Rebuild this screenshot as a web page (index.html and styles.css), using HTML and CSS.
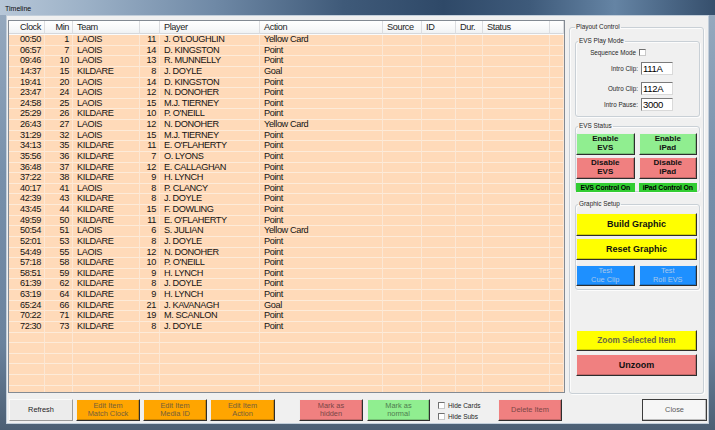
FILE: index.html
```html
<!DOCTYPE html>
<html>
<head>
<meta charset="utf-8">
<title>Timeline</title>
<link rel="stylesheet" href="styles.css">
</head>
<body>
<div class="window">
  <div class="titlebar"><span class="title">Timeline</span></div>
  <div class="client">
    <div class="top">
      <div class="grid">
        <div class="row head"><span class="r">Clock</span><span class="r">Min</span><span>Team</span><span></span><span>Player</span><span>Action</span><span>Source</span><span>ID</span><span>Dur.</span><span>Status</span><span></span></div>
        <div class="row"><span class="r">00:50</span><span class="r">1</span><span>LAOIS</span><span class="r">11</span><span>J. O'LOUGHLIN</span><span>Yellow Card</span><span></span><span></span><span></span><span></span><span></span></div>
        <div class="row"><span class="r">06:57</span><span class="r">7</span><span>LAOIS</span><span class="r">14</span><span>D. KINGSTON</span><span>Point</span><span></span><span></span><span></span><span></span><span></span></div>
        <div class="row"><span class="r">09:46</span><span class="r">10</span><span>LAOIS</span><span class="r">13</span><span>R. MUNNELLY</span><span>Point</span><span></span><span></span><span></span><span></span><span></span></div>
        <div class="row"><span class="r">14:37</span><span class="r">15</span><span>KILDARE</span><span class="r">8</span><span>J. DOYLE</span><span>Goal</span><span></span><span></span><span></span><span></span><span></span></div>
        <div class="row"><span class="r">19:41</span><span class="r">20</span><span>LAOIS</span><span class="r">14</span><span>D. KINGSTON</span><span>Point</span><span></span><span></span><span></span><span></span><span></span></div>
        <div class="row"><span class="r">23:47</span><span class="r">24</span><span>LAOIS</span><span class="r">12</span><span>N. DONOHER</span><span>Point</span><span></span><span></span><span></span><span></span><span></span></div>
        <div class="row"><span class="r">24:58</span><span class="r">25</span><span>LAOIS</span><span class="r">15</span><span>M.J. TIERNEY</span><span>Point</span><span></span><span></span><span></span><span></span><span></span></div>
        <div class="row"><span class="r">25:29</span><span class="r">26</span><span>KILDARE</span><span class="r">10</span><span>P. O'NEILL</span><span>Point</span><span></span><span></span><span></span><span></span><span></span></div>
        <div class="row"><span class="r">26:43</span><span class="r">27</span><span>LAOIS</span><span class="r">12</span><span>N. DONOHER</span><span>Yellow Card</span><span></span><span></span><span></span><span></span><span></span></div>
        <div class="row"><span class="r">31:29</span><span class="r">32</span><span>LAOIS</span><span class="r">15</span><span>M.J. TIERNEY</span><span>Point</span><span></span><span></span><span></span><span></span><span></span></div>
        <div class="row"><span class="r">34:13</span><span class="r">35</span><span>KILDARE</span><span class="r">11</span><span>E. O'FLAHERTY</span><span>Point</span><span></span><span></span><span></span><span></span><span></span></div>
        <div class="row"><span class="r">35:56</span><span class="r">36</span><span>KILDARE</span><span class="r">7</span><span>O. LYONS</span><span>Point</span><span></span><span></span><span></span><span></span><span></span></div>
        <div class="row"><span class="r">36:48</span><span class="r">37</span><span>KILDARE</span><span class="r">12</span><span>E. CALLAGHAN</span><span>Point</span><span></span><span></span><span></span><span></span><span></span></div>
        <div class="row"><span class="r">37:22</span><span class="r">38</span><span>KILDARE</span><span class="r">9</span><span>H. LYNCH</span><span>Point</span><span></span><span></span><span></span><span></span><span></span></div>
        <div class="row"><span class="r">40:17</span><span class="r">41</span><span>LAOIS</span><span class="r">8</span><span>P. CLANCY</span><span>Point</span><span></span><span></span><span></span><span></span><span></span></div>
        <div class="row"><span class="r">42:39</span><span class="r">43</span><span>KILDARE</span><span class="r">8</span><span>J. DOYLE</span><span>Point</span><span></span><span></span><span></span><span></span><span></span></div>
        <div class="row"><span class="r">43:45</span><span class="r">44</span><span>KILDARE</span><span class="r">15</span><span>F. DOWLING</span><span>Point</span><span></span><span></span><span></span><span></span><span></span></div>
        <div class="row"><span class="r">49:59</span><span class="r">50</span><span>KILDARE</span><span class="r">11</span><span>E. O'FLAHERTY</span><span>Point</span><span></span><span></span><span></span><span></span><span></span></div>
        <div class="row"><span class="r">50:54</span><span class="r">51</span><span>LAOIS</span><span class="r">6</span><span>S. JULIAN</span><span>Yellow Card</span><span></span><span></span><span></span><span></span><span></span></div>
        <div class="row"><span class="r">52:01</span><span class="r">53</span><span>KILDARE</span><span class="r">8</span><span>J. DOYLE</span><span>Point</span><span></span><span></span><span></span><span></span><span></span></div>
        <div class="row"><span class="r">54:49</span><span class="r">55</span><span>LAOIS</span><span class="r">12</span><span>N. DONOHER</span><span>Point</span><span></span><span></span><span></span><span></span><span></span></div>
        <div class="row"><span class="r">57:18</span><span class="r">58</span><span>KILDARE</span><span class="r">10</span><span>P. O'NEILL</span><span>Point</span><span></span><span></span><span></span><span></span><span></span></div>
        <div class="row"><span class="r">58:51</span><span class="r">59</span><span>KILDARE</span><span class="r">9</span><span>H. LYNCH</span><span>Point</span><span></span><span></span><span></span><span></span><span></span></div>
        <div class="row"><span class="r">61:39</span><span class="r">62</span><span>KILDARE</span><span class="r">8</span><span>J. DOYLE</span><span>Point</span><span></span><span></span><span></span><span></span><span></span></div>
        <div class="row"><span class="r">63:19</span><span class="r">64</span><span>KILDARE</span><span class="r">9</span><span>H. LYNCH</span><span>Point</span><span></span><span></span><span></span><span></span><span></span></div>
        <div class="row"><span class="r">65:24</span><span class="r">66</span><span>KILDARE</span><span class="r">21</span><span>J. KAVANAGH</span><span>Goal</span><span></span><span></span><span></span><span></span><span></span></div>
        <div class="row"><span class="r">70:22</span><span class="r">71</span><span>KILDARE</span><span class="r">19</span><span>M. SCANLON</span><span>Point</span><span></span><span></span><span></span><span></span><span></span></div>
        <div class="row"><span class="r">72:30</span><span class="r">73</span><span>KILDARE</span><span class="r">8</span><span>J. DOYLE</span><span>Point</span><span></span><span></span><span></span><span></span><span></span></div>
        <div class="row"><span></span><span></span><span></span><span></span><span></span><span></span><span></span><span></span><span></span><span></span><span></span></div>
        <div class="row"><span></span><span></span><span></span><span></span><span></span><span></span><span></span><span></span><span></span><span></span><span></span></div>
        <div class="row"><span></span><span></span><span></span><span></span><span></span><span></span><span></span><span></span><span></span><span></span><span></span></div>
        <div class="row"><span></span><span></span><span></span><span></span><span></span><span></span><span></span><span></span><span></span><span></span><span></span></div>
        <div class="row"><span></span><span></span><span></span><span></span><span></span><span></span><span></span><span></span><span></span><span></span><span></span></div>
        <div class="row"><span></span><span></span><span></span><span></span><span></span><span></span><span></span><span></span><span></span><span></span><span></span></div>
      </div>

      <fieldset class="panel">
        <legend>Playout Control</legend>
        <fieldset class="group play">
          <legend>EVS Play Mode</legend>
          <div class="frow seq"><span class="lbl">Sequence Mode</span><span class="chk"></span></div>
          <div class="frow intro"><span class="lbl">Intro Clip:</span><span class="inp">111A</span></div>
          <div class="frow outro"><span class="lbl">Outro Clip:</span><span class="inp">112A</span></div>
          <div class="frow pause"><span class="lbl">Intro Pause:</span><span class="inp">3000</span></div>
        </fieldset>
        <fieldset class="group status">
          <legend>EVS Status</legend>
          <div class="evsgrid">
            <div class="btn green bold">Enable<br>EVS</div>
            <div class="btn green bold">Enable<br>iPad</div>
            <div class="btn red bold">Disable<br>EVS</div>
            <div class="btn red bold">Disable<br>iPad</div>
            <div class="on">EVS Control On</div>
            <div class="on">iPad Control On</div>
          </div>
        </fieldset>
        <fieldset class="group graphic">
          <legend>Graphic Setup</legend>
          <div class="btn yellow big build">Build Graphic</div>
          <div class="btn yellow big reset">Reset Graphic</div>
          <div class="testrow">
            <div class="btn blue">Test<br>Cue Clip</div>
            <div class="btn blue">Test<br>Roll EVS</div>
          </div>
        </fieldset>
        <div class="btn yellow zoom">Zoom Selected Item</div>
        <div class="btn red unzoom">Unzoom</div>
      </fieldset>
    </div>

    <div class="bottom">
      <div class="btn plain refresh">Refresh</div>
      <div class="btn orange">Edit Item<br>Match Clock</div>
      <div class="btn orange">Edit Item<br>Media ID</div>
      <div class="btn orange w65">Edit Item<br>Action</div>
      <div class="btn red dim hidden">Mark as<br>hidden</div>
      <div class="btn green dim normal">Mark as<br>normal</div>
      <div class="checks">
        <div class="cline"><span class="chk"></span><span>Hide Cards</span></div>
        <div class="cline"><span class="chk"></span><span>Hide Subs</span></div>
      </div>
      <div class="btn red dim delete">Delete Item</div>
      <div class="btn close">Close</div>
    </div>
  </div>
</div>
</body>
</html>
```

FILE: styles.css
```css
* { box-sizing: border-box; }
html, body { margin: 0; padding: 0; }
body {
  width: 715px;
  height: 430px;
  overflow: hidden;
  font-family: "Liberation Sans", Arial, sans-serif;
  background: #3d5674;
}

.window {
  width: 715px;
  height: 430px;
  display: flex;
  flex-direction: column;
  padding: 0 6px 6px 6px;
  background: linear-gradient(180deg, #98abc0 0%, #7790ab 40%, #6a829d 80%, #4c5f74 100%);
}

.titlebar {
  height: 15px;
  margin: 0 -6px;
  padding-left: 5px;
  display: flex;
  align-items: center;
  background: linear-gradient(90deg, #b7c7d8 0%, #9cb1c7 12%, #6f89a6 30%, #3f5a79 48%, #2f4968 62%, #3e5a7a 74%, #6584a4 86%, #496584 94%, #364f6c 100%);
}
.title {
  font-size: 7px;
  color: #0c0c0c;
  margin-top: 1px;
}

.client {
  flex: 1;
  background: #f0f0f0;
  border: 1px solid #c2ceda;
  padding: 4px 1px 0 1px;
  display: flex;
  flex-direction: column;
}

.top {
  display: flex;
  gap: 4px;
  height: 373px;
}

/* ---------- grid ---------- */
.grid {
  width: 557px;
  height: 373px;
  flex: none;
  border: 1px solid #838a93;
  background: #ffdab9;
  overflow: hidden;
}
.row {
  display: grid;
  grid-template-columns: 36px 28px 67px 20px 100px 123px 39px 34px 27px 67px 14px;
  height: 10.63px;
}
.row > span {
  border-right: 1px solid #fce7d4;
  border-bottom: 1px solid #fdebd9;
  padding: 0 3px 0 4px;
  font-size: 9.2px;
  line-height: 9.63px;
  letter-spacing: -0.4px;
  white-space: nowrap;
  overflow: hidden;
  color: #141414;
}
.row > span.r { text-align: right; }
.row.head {
  height: 14px;
  background: linear-gradient(180deg, #ffffff 0%, #f7f8f9 60%, #eef0f2 100%);
  border-bottom: 1px solid #fbfbfb;
}
.row.head > span {
  border-right: 1px solid #dcdde0;
  border-bottom: 1px solid #d6d8db;
  line-height: 13px;
  color: #1e1e1e;
}

/* ---------- side panel ---------- */
fieldset {
  margin: 0;
  min-width: 0;
  border: 1px solid #c9d0d6;
  border-radius: 3px;
  box-shadow: inset 1px 1px 0 #fcfcfc, 1px 1px 0 #fcfcfc;
}
legend {
  font-size: 6.4px;
  line-height: 8px;
  color: #1f1f1f;
  padding: 0 1px;
}
.panel {
  width: 135px;
  height: 371px;
  flex: none;
  margin-top: 3px;
  padding: 6px 3px 0 5px;
}
.panel > legend { margin-left: 0; }

.group {
  width: 125px;
  padding: 0 2px 0 0;
}
.group > legend { margin-left: 2px; }

.play { padding-bottom: 5px; }
.frow {
  display: grid;
  grid-template-columns: 62px 32px;
  column-gap: 3px;
  align-items: center;
}
.lbl {
  font-size: 6.3px;
  color: #1f1f1f;
  text-align: right;
  white-space: nowrap;
}
.seq { height: 8px; margin-top: 3px; grid-template-columns: 60px 7px; }
.intro { height: 13px; margin-top: 6px; }
.outro { height: 13px; margin-top: 6.5px; }
.pause { height: 13px; margin-top: 3.5px; }
.inp {
  height: 13px;
  background: #fff;
  border: 1px solid;
  border-color: #7a7a7a #d9d9d9 #d9d9d9 #7a7a7a;
  font-size: 9.5px;
  line-height: 11px;
  padding-left: 1px;
  letter-spacing: -0.3px;
  color: #000;
}
.chk {
  display: inline-block;
  width: 7px;
  height: 7px;
  background: #fff;
  border: 1px solid;
  border-color: #707070 #c9c9c9 #c9c9c9 #707070;
  flex: none;
}

.status {
  margin-top: 5px;
  padding-top: 3px;
  padding-bottom: 1px;
}
.evsgrid {
  display: grid;
  grid-template-columns: 1fr 1fr;
  grid-template-rows: 22px 22px 9px;
  column-gap: 4px;
  row-gap: 2px;
}
.evsgrid .on { margin-top: 2px; }
.on {
  background: #32cd32;
  font-size: 6.9px;
  font-weight: bold;
  color: #000;
  text-align: center;
  line-height: 9px;
  height: 9px;
  white-space: nowrap;
  letter-spacing: -0.15px;
}

.graphic {
  margin-top: 8px;
  padding-top: 5px;
  padding-bottom: 3px;
}
.build { height: 23px; }
.reset { height: 22px; margin-top: 2px; }
.testrow {
  display: grid;
  grid-template-columns: 1fr 1fr;
  column-gap: 4px;
  height: 21px;
  margin-top: 5px;
}

/* ---------- buttons ---------- */
.btn {
  display: flex;
  align-items: center;
  justify-content: center;
  text-align: center;
  border: 1px solid;
  border-color: #eeeeee #2e2e2e #2e2e2e #eeeeee;
  box-shadow: inset -1px -1px 0 rgba(0,0,0,0.18);
  font-size: 7.4px;
  line-height: 8.4px;
  color: #222;
  white-space: nowrap;
}
.bold { font-size: 8px; font-weight: bold; line-height: 8.8px; color: #111; }
.big { font-size: 9px; font-weight: bold; color: #111; }
.green { background: #90ee90; }
.red { background: #f08080; }
.yellow { background: #ffff00; }
.blue { background: #1e90ff; color: #a9c8ec; }
.orange { background: #ffa500; color: #735e3c; }
.dim.red { color: #7a4646; }
.dim.green { color: #4f7c4f; }

.zoom {
  height: 21px;
  margin: 40px 3px 0 1px;
  font-size: 8.3px;
  font-weight: bold;
  color: #6b6b45;
}
.unzoom {
  height: 22px;
  margin: 3px 3px 0 1px;
  font-size: 9px;
  font-weight: bold;
  color: #111;
}

/* ---------- bottom bar ---------- */
.bottom {
  display: flex;
  height: 22px;
  margin-top: 6px;
  padding-left: 1px;
}
.bottom > .btn { width: 64px; flex: none; margin-left: 3px; }
.bottom > .refresh { margin-left: 0; }
.bottom > .w65 { width: 65px; }
.plain {
  background: #ececec;
  border-color: #fafafa #9a9a9a #9a9a9a #fafafa;
  box-shadow: none;
  color: #1e1e1e;
}
.bottom > .hidden { margin-left: 24px; }
.bottom > .normal { margin-left: 4px; width: 63px; }
.checks {
  margin-left: 8px;
  width: 60px;
  display: flex;
  flex-direction: column;
  justify-content: center;
  gap: 3px;
  padding-top: 1px;
}
.cline {
  display: flex;
  align-items: center;
  gap: 3px;
  font-size: 6.5px;
  color: #1e1e1e;
  height: 8px;
}
.bottom > .delete { margin-left: 0; }
.bottom > .close {
  margin-left: auto;
  width: 65px;
  background: #f6f6f6;
  border: 1px solid #3c3c3c;
  box-shadow: inset -1px -1px 0 #bdbdbd;
  color: #5a5a5a;
}
```
